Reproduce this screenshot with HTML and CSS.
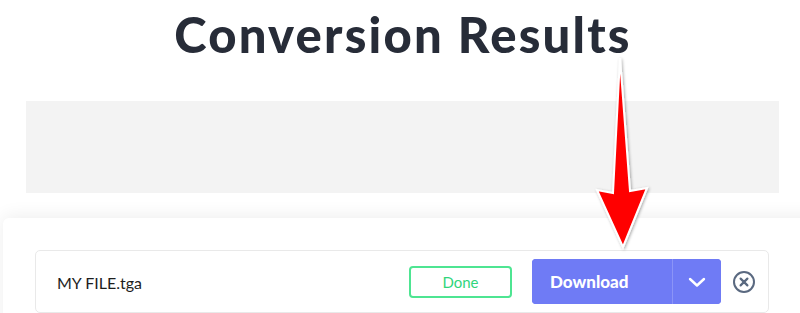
FILE: index.html
```html
<!DOCTYPE html>
<html lang="en">
<head>
<meta charset="utf-8">
<title>Conversion Results</title>
<link rel="stylesheet" href="styles.css">
</head>
<body>
<div class="page">
  <h1 class="title">Conversion Results</h1>
  <div class="ad-box"></div>
  <div class="card">
    <div class="file-row">
      <div class="file-name">MY FILE.tga</div>
      <div class="status-done">Done</div>
      <div class="download-group">
        <button class="download-main">Download</button>
        <button class="download-toggle" aria-label="More options">
          <svg width="20" height="12" viewBox="0 0 20 12"><path d="M3 3 L10 9.5 L17 3" fill="none" stroke="#fff" stroke-width="2.4" stroke-linecap="round" stroke-linejoin="round"/></svg>
        </button>
      </div>
      <button class="remove-btn" aria-label="Remove">
        <svg width="24" height="24" viewBox="0 0 24 24"><circle cx="12" cy="12" r="10" fill="none" stroke="#5a6980" stroke-width="2"/><path d="M8.6 8.6 L15.4 15.4 M15.4 8.6 L8.6 15.4" stroke="#5a6980" stroke-width="2.2" stroke-linecap="round"/></svg>
      </button>
    </div>
  </div>
  <svg class="arrow" width="80" height="210" viewBox="0 0 80 210">
    <defs>
      <filter id="sh" x="-30%" y="-10%" width="160%" height="130%">
        <feDropShadow dx="1" dy="1" stdDeviation="1.5" flood-color="#000" flood-opacity="0.35"/>
      </filter>
    </defs>
    <path d="M30 8 L40 141 L57 138 L33 197 L7 140 L23 143 Z" fill="#ff0000" stroke="#fff" stroke-width="2" stroke-linejoin="miter" filter="url(#sh)"/>
  </svg>
</div>
</body>
</html>
```
FILE: styles.css
```css
html, body {
  margin: 0;
  padding: 0;
  background: #fff;
}
body {
  font-family: "Lato", "Open Sans", sans-serif;
  overflow: hidden;
}
.page {
  position: relative;
  width: 800px;
  height: 313px;
  overflow: hidden;
}
.title {
  margin: 0;
  padding-top: 4px;
  height: 96px;
  text-align: center;
  font-family: "Lato", sans-serif;
  font-weight: 900;
  font-size: 49px;
  line-height: 60px;
  color: #272c38;
  letter-spacing: 2.2px;
  padding-left: 6px;
  box-sizing: border-box;
}
.ad-box {
  margin-top: 5px;
  margin-left: 26px;
  width: 753px;
  height: 92px;
  background: #f3f3f3;
}
.card {
  margin-top: 25px;
  margin-left: 3px;
  width: 830px;
  height: 200px;
  background: #fff;
  border-radius: 6px;
  box-shadow: 0 -2px 18px rgba(0, 0, 0, 0.07);
  padding: 32px 0 0 32px;
  box-sizing: border-box;
}
.file-row {
  width: 734px;
  box-sizing: border-box;
  border: 1px solid #e9e9e9;
  border-radius: 5px;
  display: flex;
  align-items: center;
  padding: 8px 12px 8px 21px;
}
.file-name {
  flex: 1;
  font-size: 16px;
  color: #1e1e1e;
  padding-top: 2px;
}
.status-done {
  width: 103px;
  height: 32px;
  box-sizing: border-box;
  border: 2px solid #4ee592;
  border-radius: 4px;
  color: #2fd57c;
  font-size: 15px;
  display: flex;
  align-items: center;
  justify-content: center;
  margin-right: 20px;
}
.download-group {
  display: flex;
  height: 45px;
  border-radius: 4px;
  overflow: hidden;
  background: #6f7bf5;
}
.download-main {
  width: 141px;
  border: none;
  background: #6f7bf5;
  color: #fff;
  font-family: "Lato", sans-serif;
  font-weight: 900;
  font-size: 17px;
  text-align: left;
  padding: 0 0 0 18px;
  border-right: 1px solid #8b94f7;
}
.download-toggle {
  width: 48px;
  border: none;
  background: #6f7bf5;
  padding: 0;
  display: flex;
  align-items: center;
  justify-content: center;
}
.remove-btn {
  margin-left: 11px;
  border: none;
  background: none;
  padding: 0;
  width: 24px;
  height: 24px;
  display: flex;
}
.arrow {
  position: absolute;
  left: 590px;
  top: 50px;
}
```
